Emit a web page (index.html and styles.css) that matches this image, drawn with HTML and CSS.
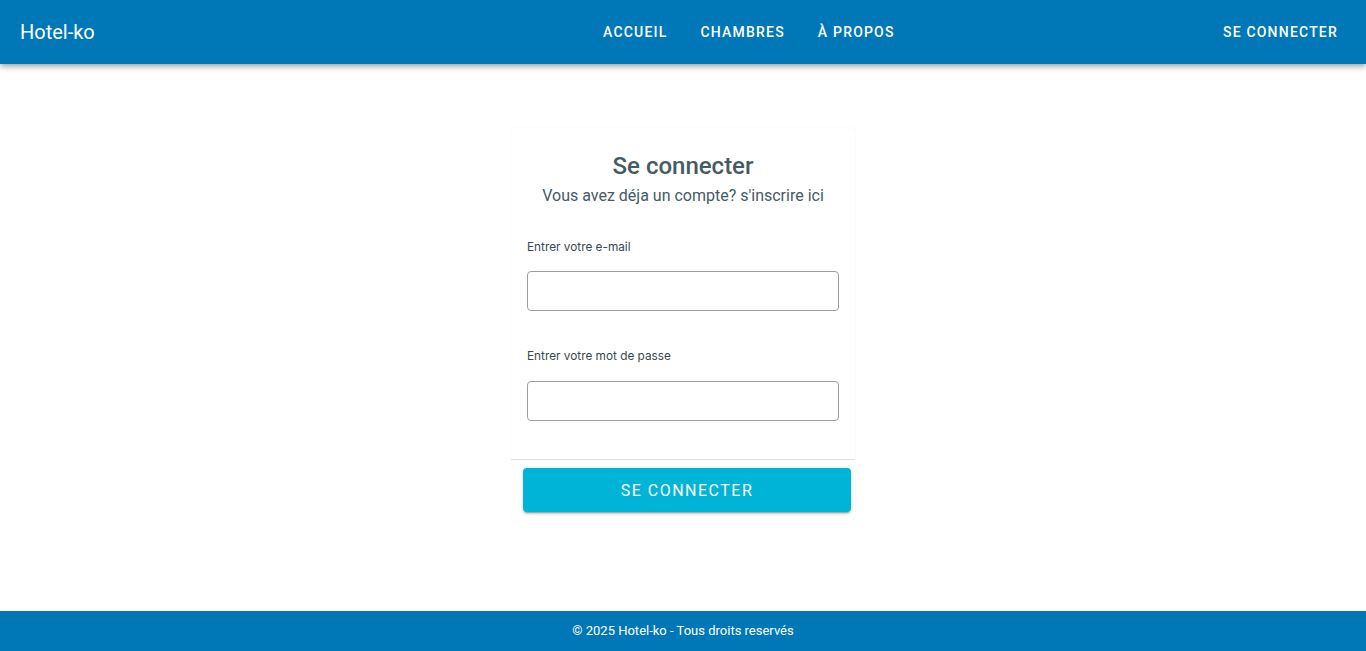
FILE: index.html
```html
<!DOCTYPE html>
<html lang="fr">
<head>
<meta charset="utf-8">
<title>Hotel-ko</title>
<link rel="stylesheet" href="styles.css">
</head>
<body>
<div class="app">
  <header class="topbar">
    <div class="brand">Hotel-ko</div>
    <nav class="nav">
      <a class="nav-btn">Accueil</a>
      <a class="nav-btn">Chambres</a>
      <a class="nav-btn">À propos</a>
    </nav>
    <div class="spacer"></div>
    <a class="nav-btn login">Se connecter</a>
  </header>
  <main class="main">
    <div class="card">
      <h1 class="title">Se connecter</h1>
      <p class="subtitle">Vous avez déja un compte? s'inscrire ici</p>
      <form class="form">
        <label class="label">Entrer votre e-mail</label>
        <input class="input" type="email">
        <label class="label second">Entrer votre mot de passe</label>
        <input class="input" type="password">
      </form>
      <div class="divider"></div>
      <div class="actions">
        <button class="submit" type="button">Se connecter</button>
      </div>
    </div>
  </main>
  <footer class="footer">© 2025 Hotel-ko - Tous droits reservés</footer>
</div>
</body>
</html>
```
FILE: styles.css
```css
* { box-sizing: border-box; }
html, body { margin: 0; padding: 0; height: 100%; }
body {
  font-family: Roboto, "Liberation Sans", sans-serif;
  background: #fff;
  color: #455a64;
}
.app { display: flex; flex-direction: column; height: 651px; }
.topbar {
  height: 64px;
  flex: none;
  background: #0077b6;
  display: flex;
  align-items: center;
  padding: 0 12px 0 20px;
  box-shadow: 0 2px 4px -1px rgba(0,0,0,0.2), 0 4px 5px 0 rgba(0,0,0,0.14), 0 1px 10px 0 rgba(0,0,0,0.12);
  position: relative;
  z-index: 2;
}
.brand {
  color: #fff;
  font-size: 20px;
  font-weight: 400;
  width: 75px;
}
.nav { display: flex; margin-left: 492px; }
.nav-btn {
  color: #fff;
  font-size: 14px;
  font-weight: 500;
  text-transform: uppercase;
  letter-spacing: 1.2px;
  padding: 0 16px;
  height: 36px;
  display: flex;
  align-items: center;
  cursor: pointer;
}
.nav-btn + .nav-btn { margin-left: 1px; }
.spacer { flex: 1; }
.main {
  flex: 1;
  display: flex;
  justify-content: center;
  align-items: flex-start;
  padding-top: 64px;
}
.card {
  width: 344px;
  border-radius: 4px;
  background: #fff;
  box-shadow: 0 0 1px rgba(0,0,0,0.12);
  padding: 0 0 8px;
}
.title {
  margin: 0;
  padding-top: 22px;
  text-align: center;
  font-size: 24px;
  font-weight: 500;
  line-height: 32px;
  color: #455a64;
}
.subtitle {
  margin: 2px 0 0;
  text-align: center;
  font-size: 16px;
  line-height: 24px;
  color: #455a64;
}
.form {
  display: flex;
  flex-direction: column;
  padding: 31px 16px 38px;
}
.label {
  font-family: Inter, "Open Sans", sans-serif;
  font-size: 11.8px;
  line-height: 16px;
  color: #37474f;
  margin-bottom: 16px;
}
.label.second { margin-top: 37px; margin-bottom: 17px; }
.input {
  width: 312px;
  height: 40px;
  border: 1px solid #9e9e9e;
  border-radius: 4px;
  padding: 0 10px;
  font-size: 14px;
  outline: none;
}
.divider { height: 1px; background: #e0e0e0; }
.actions { padding: 8px 4px 0 12px; }
.submit {
  width: 100%;
  height: 44px;
  border: none;
  border-radius: 4px;
  background: #00b4d8;
  color: #fff;
  font-family: Roboto, "Liberation Sans", sans-serif;
  font-size: 16px;
  font-weight: 400;
  letter-spacing: 1.5px;
  text-transform: uppercase;
  box-shadow: 0 3px 1px -2px rgba(0,0,0,0.2), 0 2px 2px 0 rgba(0,0,0,0.14), 0 1px 5px 0 rgba(0,0,0,0.12);
  cursor: pointer;
}
.footer {
  height: 40px;
  flex: none;
  background: #0077b6;
  color: #fff;
  font-size: 13px;
  font-weight: 400;
  display: flex;
  align-items: center;
  justify-content: center;
  padding-bottom: 1px;
}
```
